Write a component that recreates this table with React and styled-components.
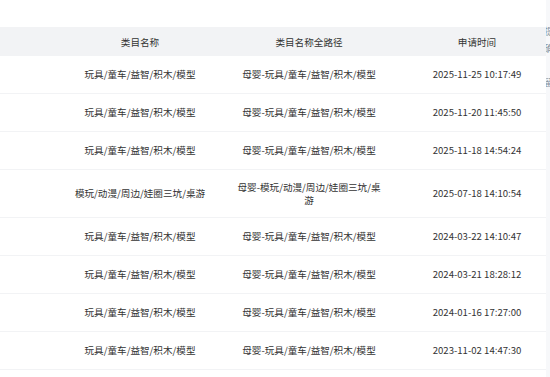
import React from 'react'
import styled, { createGlobalStyle } from 'styled-components'

const GlobalStyle = createGlobalStyle`
    html, body {
        margin: 0;
        padding: 0;
        background: #ffffff;
    }
    body {
        font-family: "Microsoft YaHei", "Noto Sans CJK SC", sans-serif;
        font-size: 9.6px;
        color: #333333;
    }
`;

const Page = styled.div`
    display: flex;
    width: 550px;
    height: 377px;
    overflow: hidden;
`;

const TableWrap = styled.div`
    width: 546px;
    flex-shrink: 0;
    overflow: hidden;
    padding-top: 27px;
`;

const Table = styled.div`
    display: grid;
    grid-template-columns: 56px 168px 170px 166px;
    width: 560px;
`;

const HeadCell = styled.div`
    display: flex;
    align-items: center;
    justify-content: center;
    height: 29px;
    background: #f2f3f5;
    color: #333333;
`;

const Cell = styled.div`
    display: flex;
    align-items: center;
    justify-content: center;
    text-align: center;
    height: ${(p) => (p.$tall ? 47 : 37)}px;
    border-bottom: 1px solid #f2f3f5;
    line-height: 13px;
    padding: 0 12px;
`;

const SidePanel = styled.div`
    flex: 1;
    background: #f7f8fa;
    overflow: hidden;
    display: flex;
    flex-direction: column;
    padding-top: 25px;
    white-space: nowrap;
    color: #86909c;
`;

const SideText = styled.span`
    margin-left: -2px;
    line-height: 12px;
    margin-bottom: ${(p) => p.$gap || 0}px;
`;

const rows = [
    ['玩具/童车/益智/积木/模型', '母婴-玩具/童车/益智/积木/模型', '2025-11-25 10:17:49'],
    ['玩具/童车/益智/积木/模型', '母婴-玩具/童车/益智/积木/模型', '2025-11-20 11:45:50'],
    ['玩具/童车/益智/积木/模型', '母婴-玩具/童车/益智/积木/模型', '2025-11-18 14:54:24'],
    ['模玩/动漫/周边/娃圈三坑/桌游', '母婴-模玩/动漫/周边/娃圈三坑/桌游', '2025-07-18 14:10:54', true],
    ['玩具/童车/益智/积木/模型', '母婴-玩具/童车/益智/积木/模型', '2024-03-22 14:10:47'],
    ['玩具/童车/益智/积木/模型', '母婴-玩具/童车/益智/积木/模型', '2024-03-21 18:28:12'],
    ['玩具/童车/益智/积木/模型', '母婴-玩具/童车/益智/积木/模型', '2024-01-16 17:27:00'],
    ['玩具/童车/益智/积木/模型', '母婴-玩具/童车/益智/积木/模型', '2023-11-02 14:47:30'],
]

const App = () => {
    return (
        <Page>
            <GlobalStyle />
            <TableWrap>
                <Table>
                    <HeadCell />
                    <HeadCell>类目名称</HeadCell>
                    <HeadCell>类目名称全路径</HeadCell>
                    <HeadCell>申请时间</HeadCell>
                    {rows.map(([name, path, time, tall], i) => (
                        <React.Fragment key={i}>
                            <Cell $tall={tall} />
                            <Cell $tall={tall}>{name}</Cell>
                            <Cell $tall={tall}>{path}</Cell>
                            <Cell $tall={tall}>{time}</Cell>
                        </React.Fragment>
                    ))}
                </Table>
            </TableWrap>
            <SidePanel>
                <SideText $gap={5}>提</SideText>
                <SideText $gap={22}>确</SideText>
                <SideText>留</SideText>
            </SidePanel>
        </Page>
    )
}

export default App
